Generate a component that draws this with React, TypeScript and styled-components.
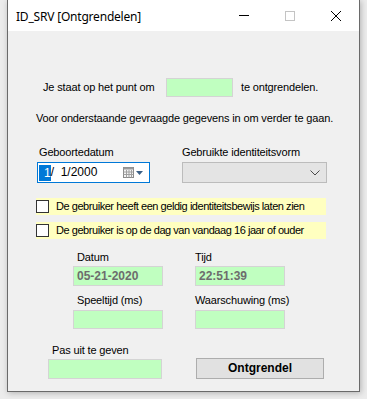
import React from "react";
import styled, { createGlobalStyle } from "styled-components";

const Global = createGlobalStyle`
  html, body { margin: 0; padding: 0; background: #e9e9e9; }
  body { font-family: "Liberation Sans", Arial, sans-serif; font-size: 11px; color: #000; }
  #root { width: 367px; height: 399px; overflow: hidden; }
`;

const Desk = styled.div`
  width: 367px;
  height: 399px;
  background: #ececec;
  padding-left: 7px;
  box-sizing: border-box;
`;

const Window = styled.div`
  width: 353px;
  height: 392px;
  box-sizing: border-box;
  border: 1px solid #6a6a6a;
  border-top: none;
  background: #f0f0f0;
  display: flex;
  flex-direction: column;
  box-shadow: 1px 1px 6px rgba(0, 0, 0, 0.25);
`;

const TitleBar = styled.div`
  height: 31px;
  background: #fff;
  display: flex;
  align-items: center;
  padding-left: 8px;
  flex-shrink: 0;
`;

const Title = styled.div`
  font-family: "Noto Sans", "Segoe UI", sans-serif;
  font-size: 12px;
  letter-spacing: -0.2px;
  flex: 1;
  margin-top: 1px;
`;

const Controls = styled.div`
  display: flex;
  height: 31px;
`;

const Ctrl = styled.div`
  width: 46px;
  height: 31px;
  display: flex;
  align-items: center;
  justify-content: center;
`;

const Body = styled.div`
  flex: 1;
  display: flex;
  flex-direction: column;
  line-height: 13px;
  letter-spacing: -0.15px;
`;

const IntroRow = styled.div`
  margin-top: 47px;
  padding-left: 35px;
  display: grid;
  grid-template-columns: 123px 67px auto;
  align-items: center;
  height: 19px;
`;

const GreenBox = styled.div<{ $w?: number; $h?: number }>`
  width: ${(p) => p.$w ?? 67}px;
  height: ${(p) => p.$h ?? 19}px;
  box-sizing: border-box;
  background: #c0ffc0;
  border: 1px solid #d4d4d4;
  display: flex;
  align-items: center;
  padding-left: 3px;
  font-weight: bold;
  font-size: 12px;
  color: #6d6d6d;
  letter-spacing: 0;
`;

const After = styled.span`
  padding-left: 8px;
`;

const Sentence = styled.div`
  margin-top: 15px;
  padding-left: 28px;
`;

const IdGrid = styled.div`
  margin-top: 21px;
  padding-left: 29px;
  display: grid;
  grid-template-columns: 113px 145px;
  column-gap: 32px;
  row-gap: 3px;
`;

const Label = styled.div<{ $indent?: number }>`
  padding-left: ${(p) => p.$indent ?? 0}px;
  height: 13px;
  white-space: nowrap;
`;

const DatePicker = styled.div`
  height: 21px;
  box-sizing: border-box;
  border: 1px solid #0078d7;
  background: #fff;
  display: flex;
  align-items: center;
  padding-left: 1px;
  font-size: 12px;
  letter-spacing: 0;
`;

const Sel = styled.span`
  display: inline-block;
  background: #0078d7;
  color: #fff;
  padding: 1px 0 1px 5px;
  line-height: 14px;
`;

const DateText = styled.span`
  flex: 1;
  white-space: pre;
  color: #000;
`;

const PickerIcons = styled.div`
  display: flex;
  align-items: center;
  gap: 2px;
  padding-right: 6px;
`;

const Combo = styled.div`
  height: 21px;
  box-sizing: border-box;
  border: 1px solid #bcbcbc;
  background: #e4e4e4;
  display: flex;
  align-items: center;
  justify-content: flex-end;
  padding-right: 6px;
`;

const CheckRow = styled.div<{ $top: number }>`
  margin-top: ${(p) => p.$top}px;
  margin-left: 28px;
  width: 290px;
  height: 17px;
  background: #ffffc0;
  display: flex;
  align-items: center;
  gap: 7px;
  white-space: nowrap;
  letter-spacing: -0.45px;
`;

const Box = styled.div`
  width: 13px;
  height: 13px;
  box-sizing: border-box;
  border: 1px solid #333;
  background: #fff;
  flex-shrink: 0;
`;

const FieldGrid = styled.div<{ $top: number }>`
  margin-top: ${(p) => p.$top}px;
  padding-left: 65px;
  display: grid;
  grid-template-columns: 90px 90px;
  column-gap: 32px;
`;

const Field = styled.div<{ $gap: number }>`
  display: flex;
  flex-direction: column;
  gap: ${(p) => p.$gap}px;
`;

const BottomRow = styled.div`
  margin-top: 15px;
  padding-left: 40px;
  display: grid;
  grid-template-columns: 114px 128px;
  column-gap: 34px;
  align-items: end;
`;

const Button = styled.div`
  height: 21px;
  box-sizing: border-box;
  border: 1px solid #adadad;
  background: #e1e1e1;
  display: flex;
  align-items: center;
  justify-content: center;
  font-weight: bold;
  font-size: 12px;
  letter-spacing: 0;
`;

const CalendarIcon = () => (
  <svg width="11" height="11" viewBox="0 0 11 11">
    <rect x="0.5" y="0.5" width="10" height="10" fill="#f4f4f4" stroke="#8a8a8a" />
    <rect x="0.5" y="0.5" width="10" height="2" fill="#9a9a9a" />
    {[3.5, 6, 8.5].map((x) => (
      <line key={"v" + x} x1={x} y1="3" x2={x} y2="10.5" stroke="#a0a0a0" />
    ))}
    {[5, 7.5].map((y) => (
      <line key={"h" + y} x1="0.5" y1={y} x2="10.5" y2={y} stroke="#a0a0a0" />
    ))}
  </svg>
);

const Arrow = () => (
  <svg width="7" height="4" viewBox="0 0 7 4">
    <path d="M0 0 L7 0 L3.5 4 Z" fill="#3a5f86" />
  </svg>
);

const Chevron = () => (
  <svg width="10" height="6" viewBox="0 0 10 6">
    <path d="M0.5 0.5 L5 5 L9.5 0.5" fill="none" stroke="#4a4a4a" strokeWidth="1" />
  </svg>
);

export default function App() {
  return (
    <>
      <Global />
      <Desk>
        <Window>
          <TitleBar>
            <Title>ID_SRV [Ontgrendelen]</Title>
            <Controls>
              <Ctrl>
                <svg width="10" height="1" viewBox="0 0 10 1">
                  <rect width="10" height="1" fill="#000" />
                </svg>
              </Ctrl>
              <Ctrl>
                <svg width="10" height="10" viewBox="0 0 10 10">
                  <rect x="0.5" y="0.5" width="9" height="9" fill="none" stroke="#c4c4c4" />
                </svg>
              </Ctrl>
              <Ctrl>
                <svg width="10" height="10" viewBox="0 0 10 10">
                  <path d="M0 0 L10 10 M10 0 L0 10" stroke="#000" strokeWidth="1" />
                </svg>
              </Ctrl>
            </Controls>
          </TitleBar>
          <Body>
            <IntroRow>
              <span>Je staat op het punt om</span>
              <GreenBox />
              <After>te ontgrendelen.</After>
            </IntroRow>
            <Sentence>Voor onderstaande gevraagde gegevens in om verder te gaan.</Sentence>
            <IdGrid>
              <Label $indent={2}>Geboortedatum</Label>
              <Label>Gebruikte identiteitsvorm</Label>
              <DatePicker>
                <Sel>1</Sel>
                <DateText>{"/  1/2000"}</DateText>
                <PickerIcons>
                  <CalendarIcon />
                  <Arrow />
                </PickerIcons>
              </DatePicker>
              <Combo>
                <Chevron />
              </Combo>
            </IdGrid>
            <CheckRow $top={15}>
              <Box />
              De gebruiker heeft een geldig identiteitsbewijs laten zien
            </CheckRow>
            <CheckRow $top={7}>
              <Box />
              De gebruiker is op de dag van vandaag 16 jaar of ouder
            </CheckRow>
            <FieldGrid $top={12}>
              <Field $gap={2}>
                <Label $indent={4}>Datum</Label>
                <GreenBox $w={90} $h={20}>05-21-2020</GreenBox>
              </Field>
              <Field $gap={2}>
                <Label>Tijd</Label>
                <GreenBox $w={90} $h={20}>22:51:39</GreenBox>
              </Field>
            </FieldGrid>
            <FieldGrid $top={8}>
              <Field $gap={3}>
                <Label $indent={4}>Speeltijd (ms)</Label>
                <GreenBox $w={90} $h={19} />
              </Field>
              <Field $gap={3}>
                <Label>Waarschuwing (ms)</Label>
                <GreenBox $w={90} $h={19} />
              </Field>
            </FieldGrid>
            <BottomRow>
              <Field $gap={2}>
                <Label $indent={4}>Pas uit te geven</Label>
                <GreenBox $w={114} $h={20} />
              </Field>
              <Button>Ontgrendel</Button>
            </BottomRow>
          </Body>
        </Window>
      </Desk>
    </>
  );
}
